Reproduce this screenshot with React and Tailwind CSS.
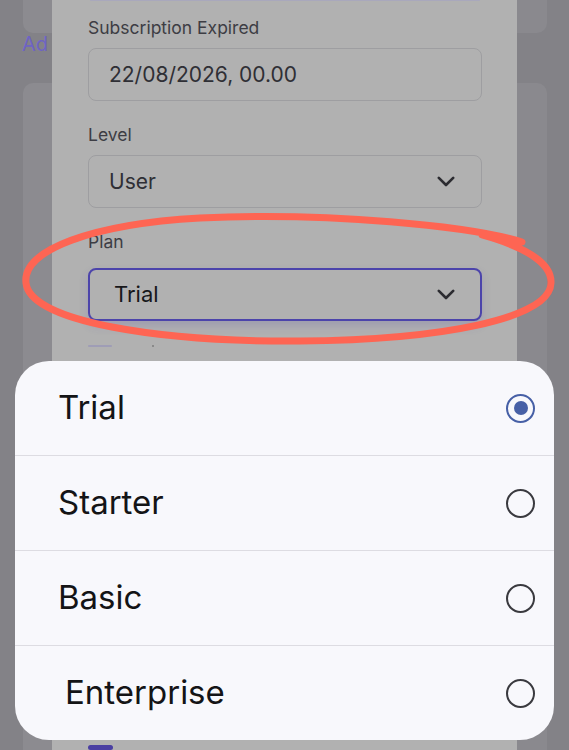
const plans = [
  { name: 'Trial', selected: true },
  { name: 'Starter' },
  { name: 'Basic' },
  { name: 'Enterprise', indent: true },
]

function Chevron() {
  return (
    <svg width="18" height="11" viewBox="0 0 18 11" fill="none" className="text-[#2c2c31]">
      <path d="M1.8 1.8 L9 9 L16.2 1.8" stroke="currentColor" strokeWidth="2.6" strokeLinecap="round" strokeLinejoin="round" />
    </svg>
  )
}

function Field({ label, value, select, active }) {
  return (
    <div className="flex flex-col">
      <div className="h-[24px] leading-[24px] text-[17.5px] text-[#3d3d44]">{label}</div>
      <div
        className={
          active
            ? 'mt-[14px] h-[53px] rounded-[8px] border-2 border-[#4c44ab] shadow-[0_5px_10px_rgba(76,68,171,0.18)] flex items-center justify-between pl-[24px] pr-[25px]'
            : 'mt-[8px] h-[53px] rounded-[8px] border-[1.5px] border-[#9e9ea1] flex items-center justify-between pl-[20px] pr-[26px]'
        }
      >
        <span className={active ? 'text-[22px] text-[#17171a]' : 'text-[21px] text-[#2f2f35]'}>{value}</span>
        {select && <Chevron />}
      </div>
    </div>
  )
}

function Radio({ on }) {
  if (on) {
    return (
      <div className="w-[29px] h-[29px] rounded-full border-[2.5px] border-[#4760a6] flex items-center justify-center">
        <div className="w-[14px] h-[14px] rounded-full bg-[#4760a6]" />
      </div>
    )
  }
  return <div className="w-[29px] h-[29px] rounded-full border-[2.5px] border-[#3a3a3f]" />
}

export default function App() {
  return (
    <div className="relative w-[569px] h-[750px] overflow-hidden bg-[#838287] font-['Inter',sans-serif]">
      <div className="flex h-full">
        {/* page behind, left edge */}
        <div className="w-[52px] flex-shrink-0 pl-[23px] flex flex-col">
          <div className="h-[33px] rounded-bl-[10px] bg-[#8c8b90]" />
          <div className="h-[50px] leading-[22px] text-[20px] text-[#6e63c4] -ml-[1px]">Ad</div>
          <div className="flex-1 rounded-tl-[10px] bg-[#8c8b90]" />
        </div>

        {/* dimmed dialog */}
        <div className="w-[465px] flex-shrink-0 bg-[#b1b1b1] pl-[36px] pr-[35px] flex flex-col">
          <div className="mx-[2px] h-[3px] rounded-b-[6px] bg-[#a9a8bc]" />
          <div className="mt-[15px] flex flex-col gap-[22px]">
            <Field label="Subscription Expired" value="22/08/2026, 00.00" />
            <Field label="Level" value="User" select />
            <Field label="Plan" value="Trial" select active />
          </div>
          <div className="mt-[24px] flex items-center gap-[40px]">
            <div className="w-[24px] h-[2px] rounded bg-[#9f9db6]" />
            <div className="w-[2px] h-[2px] bg-[#8a8a8a]" />
          </div>
          <div className="mt-[398px] w-[25px] h-[20px] rounded-[6px] bg-[#4a3fa2]" />
        </div>

        {/* page behind, right edge */}
        <div className="flex-1 flex flex-col pr-[22px]">
          <div className="h-[33px] rounded-br-[10px] bg-[#8a898e]" />
          <div className="h-[50px]" />
          <div className="flex-1 rounded-tr-[10px] bg-[#8a898e]" />
        </div>
      </div>

      {/* annotation */}
      <svg className="absolute inset-0 pointer-events-none" width="569" height="750" viewBox="0 0 569 750">
        <path
          d="M522 242 C470 226 330 212 200 218 C92 224 22 250 26 283 C30 322 160 342 300 341 C440 340 550 319 551 283 C552 262 522 246 482 235"
          fill="none"
          stroke="#fe6553"
          strokeWidth="7"
          strokeLinecap="round"
        />
      </svg>

      {/* option sheet */}
      <div className="absolute left-[15px] top-[361px] w-[539px] rounded-[34px] bg-[#f8f8fc] overflow-hidden flex flex-col">
        {plans.map((p, i) => (
          <div
            key={p.name}
            className={
              'flex items-center justify-between pr-[19px] ' +
              (p.indent ? 'pl-[50px] ' : 'pl-[43px] ') +
              (i > 0 ? 'h-[95px] border-t border-[#dddce2]' : 'h-[94px]')
            }
          >
            <span className="text-[33px] text-[#141416]">{p.name}</span>
            <Radio on={p.selected} />
          </div>
        ))}
      </div>
    </div>
  )
}
